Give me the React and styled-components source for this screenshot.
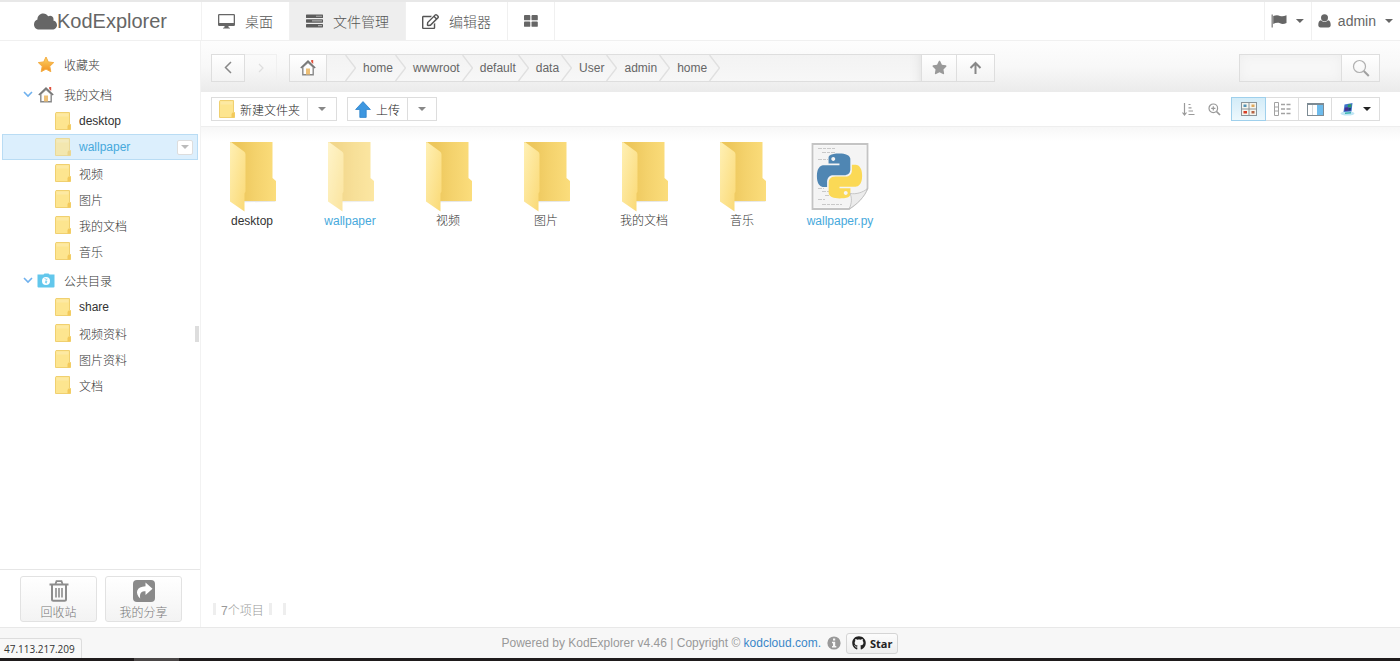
import React from "react";
import styled, { createGlobalStyle, css } from "styled-components";
import { useState } from "react";
import { FaCloud, FaRegEdit, FaStar, FaGithub } from "react-icons/fa";

const leafDocs = ["desktop", "wallpaper", "视频", "图片", "我的文档", "音乐"];
const leafPublic = ["share", "视频资料", "图片资料", "文档"];
const crumbs = ["home", "wwwroot", "default", "data", "User", "admin", "home"];

/* ---------- icons ---------- */

const DesktopIcon = () => (
  <svg width="17" height="16" viewBox="0 0 17 16">
    <path fill="#666" fillRule="evenodd" d="M1.3 1h14.4A1.3 1.3 0 0 1 17 2.300V11.700A1.300 1.300 0 0 1 15.700 13H10.500V14.200L12 15V15.600H5V15L6.500 14.200V13H1.300A1.300 1.300 0 0 1 0 11.700V2.300A1.300 1.300 0 0 1 1.300 1ZM1.300 2.200V10H15.700V2.200Z" />
  </svg>
);

const TasksIcon = () => (
  <svg width="17" height="14" viewBox="0 0 17 14">
    <rect x="0" y="0.500" width="17" height="3.500" rx="0.600" fill="#5c5c5c" />
    <rect x="0" y="5.200" width="17" height="3.500" rx="0.600" fill="#5c5c5c" />
    <rect x="0" y="9.900" width="17" height="3.500" rx="0.600" fill="#5c5c5c" />
    <path d="M10 2.200h6M6 6.900h10M12 11.600h4" stroke="#aaa" strokeWidth="1.100" />
  </svg>
);

const GridIcon = () => (
  <svg width="14" height="12" viewBox="0 0 14 12" fill="#666">
    <rect x="0" y="0" width="6.300" height="5.300" rx="0.900" />
    <rect x="7.500" y="0" width="6.300" height="5.300" rx="0.900" />
    <rect x="0" y="6.500" width="6.300" height="5.300" rx="0.900" />
    <rect x="7.500" y="6.500" width="6.300" height="5.300" rx="0.900" />
  </svg>
);

const FlagIcon = () => (
  <svg width="16" height="14" viewBox="0 0 16 14" fill="#666">
    <path d="M0.500 0.500h1.400v13H0.500z" fill="#8a8a8a" />
    <path d="M2.200 2C4.500 1 7 0.800 9 1.900C11 2.800 13 2.300 15.500 1.200V8.900C13 10.200 11 10.300 9 9.300C7 8.400 4.500 8.800 2.200 9.900Z" />
  </svg>
);

const UserIcon = () => (
  <svg width="13" height="14" viewBox="0 0 13 14" fill="#666">
    <circle cx="6.500" cy="3.700" r="3.500" />
    <path d="M3 6.300C1 6.700 0.300 8.500 0.300 11C0.300 12.600 1.100 13.500 2.500 13.500H10.500C11.900 13.500 12.700 12.600 12.700 11C12.700 8.500 12 6.700 10 6.300C8 8.300 5 8.300 3 6.300Z" />
  </svg>
);

const HouseIcon = () => (
  <svg width="16" height="17" viewBox="0 0 16 17">
    <path d="M11.200 1h2v4l-2-2z" fill="#e0503c" />
    <path d="M2.800 8v7.800h10.400V8L8 3.200z" fill="#fdfdfd" stroke="#888" strokeWidth="1.400" />
    <path d="M0.800 9L8 2l7.200 7" fill="none" stroke="#777" strokeWidth="1.500" />
    <rect x="6" y="9.500" width="4" height="6" fill="#edbf76" />
  </svg>
);

const SmallFolder = ({ faded }) => (
  <svg width="16" height="18" viewBox="0 0 16 18" opacity={faded ? 0.7 : 1}>
    <path d="M0.500 1.200L1 0.500H14.500V12L15.500 12.500V17.500H0.500Z" fill="#fde58f" stroke="#f0d070" />
    <path d="M13.500 12.500H15.500V17.500H12.500V14Z" fill="#f3c95a" />
    <path d="M1.500 1.500h12v3h-12z" fill="#fff" opacity="0.180" />
  </svg>
);

const PublicIcon = () => (
  <svg width="18" height="15" viewBox="0 0 18 15">
    <path d="M0.500 1.500h6l1-1h4l1 1h5V13.500a1 1 0 0 1-1 1H1.500a1 1 0 0 1-1-1Z" fill="#62c7ec" />
    <circle cx="9" cy="8" r="4" fill="#fff" />
    <path d="M7.500 5.500l2 1 1-.5M9 7.500l.8.8-.5 2-1-.8z" fill="#62c7ec" stroke="#62c7ec" strokeWidth="0.500" />
  </svg>
);

const StarIcon = () => (
  <svg width="17" height="17" viewBox="0 0 17 17">
    <defs>
      <linearGradient id="gold" x1="0" y1="0" x2="0" y2="1">
        <stop offset="0" stopColor="#fdd566" />
        <stop offset="1" stopColor="#f2901f" />
      </linearGradient>
    </defs>
    <path d="M8.500 1l2.300 4.900 5.400.7-3.900 3.700 1 5.400-4.800-2.600-4.800 2.600 1-5.400L.8 6.600l5.400-.7z" fill="url(#gold)" stroke="#f4ad43" strokeWidth="1" strokeLinejoin="round" />
  </svg>
);

const ChevronDown = () => (
  <svg width="10" height="7" viewBox="0 0 10 7">
    <path d="M1 1l4 4 4-4" fill="none" stroke="#6fb1ee" strokeWidth="1.600" />
  </svg>
);

const CrumbArrow = () => (
  <svg width="11" height="26" viewBox="0 0 11 26">
    <path d="M0.500 0l10 13-10 13" fill="none" stroke="#e0e0e0" strokeWidth="1.400" />
  </svg>
);

const BackIcon = () => (
  <svg width="8" height="13" viewBox="0 0 8 13">
    <path d="M7 1L1.500 6.500 7 12" fill="none" stroke="#888" strokeWidth="1.500" />
  </svg>
);

const ForwardIcon = () => (
  <svg width="6" height="10" viewBox="0 0 6 10">
    <path d="M1 1l4 4-4 4" fill="none" stroke="#dedede" strokeWidth="1.200" />
  </svg>
);

const UpIcon = () => (
  <svg width="13" height="14" viewBox="0 0 13 14">
    <path d="M6.500 13V2M1.500 7l5-5 5 5" fill="none" stroke="#888" strokeWidth="2" />
  </svg>
);

const SearchIcon = () => (
  <svg width="18" height="18" viewBox="0 0 18 18" fill="none">
    <circle cx="7.500" cy="7.500" r="6" stroke="#b0b0b0" strokeWidth="1.200" />
    <path d="M11.800 12l5 5" stroke="#a0a0a0" strokeWidth="2" />
  </svg>
);

const UploadIcon = () => (
  <svg width="16" height="17" viewBox="0 0 16 17">
    <path d="M8 0.600L15.400 8.500H11.200V16.400H4.800V8.500H0.600Z" fill="#3d97e0" stroke="#2f83cc" strokeWidth="0.800" />
  </svg>
);

const SortIcon = () => (
  <svg width="13" height="13" viewBox="0 0 13 13" fill="none" stroke="#9a9a9a">
    <path d="M2.500 0v12M0.500 9.500l2 2.500 2-2.500M6.500 1.500h2M6.500 4.800h3M6.500 8h4.500M6.500 11.500h6" strokeWidth="1.200" />
  </svg>
);

const ZoomIcon = () => (
  <svg width="13" height="13" viewBox="0 0 13 13" fill="none" stroke="#999">
    <circle cx="5.300" cy="5.300" r="4.300" strokeWidth="1.200" />
    <path d="M8.500 8.500l3.500 3.500" strokeWidth="1.700" />
    <path d="M5.300 3.200v4.200M3.200 5.300h4.200" strokeWidth="1.200" />
  </svg>
);

const ThumbsIcon = () => (
  <svg width="16" height="14" viewBox="0 0 16 14">
    <rect x="0.500" y="0.500" width="15" height="13" fill="#f5f5ee" stroke="#8a9499" />
    <path d="M8 0v14M0 7h16" stroke="#8a9499" />
    <rect x="2.500" y="2.500" width="3" height="2.500" fill="#5192b5" />
    <rect x="10.500" y="2.500" width="3" height="2.500" fill="#dfa85a" />
    <rect x="2.500" y="9" width="3.500" height="2.500" fill="#d63d25" />
    <rect x="10.500" y="9" width="3" height="2.500" fill="#b56343" />
  </svg>
);

const ListIcon = () => (
  <svg width="17" height="14" viewBox="0 0 17 14" fill="none" stroke="#a2a2a2">
    <path d="M0.500 0.500h4v13h-4zM0.500 5h4M0.500 9h4" />
    <path d="M7 2.500h4M12.500 2.500h4M7 7h4M12.500 7h4M7 11.500h4M12.500 11.500h4" strokeWidth="1.400" />
  </svg>
);

const SplitIcon = () => (
  <svg width="17" height="13" viewBox="0 0 17 13">
    <rect x="0.500" y="0.500" width="16" height="12" fill="#fff" stroke="#7d8b94" />
    <path d="M0.500 1.500h16" stroke="#7d8b94" />
    <rect x="10" y="2" width="6" height="10" fill="#6dbbec" />
    <path d="M5.500 2v10" stroke="#d5dadd" />
  </svg>
);

const ThemeIcon = () => (
  <svg width="15" height="14" viewBox="0 0 15 14">
    <ellipse cx="7.500" cy="11.500" rx="7" ry="2" fill="#bfe6f5" />
    <path d="M4.500 2.500L12.500 1l-1 8.500-8 .5z" fill="#3f74cc" />
    <path d="M8 2.500l3.500-.3-.4 3-3.600.3z" fill="#2c9a62" />
    <path d="M5 5.500l3.500-.3-.4 3.500-3.600.3z" fill="#4a2f8f" />
    <path d="M8.500 6l2.500-.2-.3 2.700-2.500.2z" fill="#243a78" />
    <path d="M5 10.500l6-.5v1.500l-6 .5z" fill="#3db4b0" />
  </svg>
);

const TrashIcon = () => (
  <svg width="20" height="22" viewBox="0 0 20 22" fill="none" stroke="#8c8c8c">
    <path d="M0.500 4.500h19" strokeWidth="2" />
    <path d="M6.500 4L7.500 1.200h5L13.500 4" strokeWidth="1.800" />
    <path d="M3 5v14.200a1.500 1.500 0 0 0 1.500 1.500h11a1.500 1.500 0 0 0 1.500-1.500V5" strokeWidth="2" />
    <path d="M7 8v9.500M10 8v9.500M13 8v9.500" strokeWidth="1.600" />
  </svg>
);

const ShareIcon = () => (
  <svg width="22" height="22" viewBox="0 0 22 22">
    <rect width="22" height="22" rx="4" fill="#8a8a8a" />
    <path d="M12.500 2.500l7 6.200-7 6.200v-3.700C8.500 11.200 6.300 13 7.200 18.500C1.500 13 3.500 6.500 12.500 6.200Z" fill="#fff" />
  </svg>
);

const InfoIcon = () => (
  <svg width="14" height="14" viewBox="0 0 14 14">
    <circle cx="7" cy="7" r="6.600" fill="#999" />
    <path d="M6 2.500h2.200v2H6zM5 5.800h3.200v4.200H9.300v1.500H5v-1.500h1V7.200H5z" fill="#f7f7f7" />
  </svg>
);

const BigFolder = ({ faded }) => (
  <svg width="48" height="70" viewBox="0 0 48 70" opacity={faded ? 0.7 : 1}>
    <defs>
      <linearGradient id="back" x1="0" y1="0" x2="1" y2="0">
        <stop offset="0.200" stopColor="#edc75c" />
        <stop offset="0.550" stopColor="#f4d26c" />
        <stop offset="1" stopColor="#fbdd7c" />
      </linearGradient>
      <linearGradient id="flap" x1="0" y1="0" x2="1" y2="1">
        <stop offset="0" stopColor="#fff0b4" />
        <stop offset="1" stopColor="#fad975" />
      </linearGradient>
    </defs>
    <path d="M16 59.500h31l1 .8-32 .5z" fill="#e6e6e6" />
    <path d="M2 0.500H44.500V36.500L48 39.500V59.500H2Z" fill="url(#back)" />
    <path d="M2 1L3 0.500L16 10Q17.500 11 17.500 13V50L16.500 52V70L2 60Z" fill="url(#flap)" />
  </svg>
);

const PythonFile = () => (
  <svg width="58" height="68" viewBox="0 0 58 68">
    <path d="M1.500 1.500H56.500V46C53 54 46 61 38 66.500H1.500Z" fill="#f8f8f8" stroke="#c4c4c4" strokeWidth="1.800" />
    <path d="M3.500 3.500H54.500V46L38 64.500H3.500Z" fill="#f4f4f4" />
    <path d="M7 6h18M11 10h13M7 17h10M7 46h6M11 49h7M14 53h8M7 57h7M11 62h20" stroke="#c9c9c9" strokeDasharray="4 1 3 1" />
    <g transform="translate(6 11) scale(1.870)">
      <path fill="#4f86b3" d="M14.250.180l.9.200.730.260.590.300.450.320.340.340.250.340.160.330.100.300.040.260.020.200-.010.130V8.500l-.050.630-.130.550-.210.460-.260.380-.300.310-.330.250-.350.190-.350.140-.330.100-.300.070-.260.040-.210.020H8.770l-.690.050-.590.140-.500.220-.410.270-.330.320-.270.350-.200.360-.150.370-.100.350-.070.320-.040.270-.020.210v3.060H3.170l-.210-.030-.280-.070-.320-.120-.350-.180-.360-.260-.360-.360-.350-.460-.320-.590-.280-.730-.210-.880-.140-1.050-.050-1.230.060-1.220.160-1.040.240-.870.320-.710.360-.570.400-.440.420-.330.420-.240.400-.160.360-.100.320-.050.240-.010h.160l.060.010h8.160v-.830H6.180l-.010-2.750-.020-.370.050-.340.110-.310.170-.280.250-.260.310-.230.380-.200.440-.180.510-.150.580-.120.640-.100.710-.060.770-.040.840-.020 1.270.050zm-6.300 1.980l-.230.330-.080.410.080.410.230.340.330.220.410.090.410-.090.330-.220.230-.340.080-.410-.080-.410-.230-.330-.330-.220-.410-.090-.410.090z" />
      <path fill="#fbd956" d="M21.100 6.110l.280.060.320.120.350.180.360.270.360.350.350.470.320.590.280.730.210.880.140 1.040.050 1.230-.060 1.230-.160 1.040-.240.860-.320.710-.360.570-.400.450-.420.330-.420.240-.400.160-.360.090-.320.050-.240.020-.160-.010h-8.220v.820h5.840l.010 2.760.020.360-.050.340-.110.310-.170.290-.250.250-.310.240-.380.200-.440.170-.510.150-.580.130-.640.090-.710.070-.770.040-.840.010-1.270-.040-1.070-.140-.900-.200-.730-.250-.590-.300-.450-.330-.340-.340-.250-.340-.160-.330-.100-.300-.040-.250-.020-.200.010-.130v-5.340l.050-.640.130-.540.210-.460.260-.380.300-.320.330-.240.350-.200.350-.140.330-.100.300-.060.260-.040.210-.020.130-.010h5.840l.690-.050.590-.140.500-.210.410-.280.330-.320.270-.350.200-.360.150-.360.100-.350.070-.320.040-.280.020-.210V6.070h2.090l.140.010zm-6.470 14.250l-.230.330-.080.410.080.410.230.330.330.230.410.080.410-.080.330-.230.230-.330.080-.410-.080-.410-.230-.330-.330-.230-.410-.080-.410.080z" />
    </g>
    <path d="M38 66.500C41 61 41 55 39 51C45 52 52 50 56.500 46C54 54 46 62 38 66.500Z" fill="#ececec" stroke="#bbb" strokeWidth="0.800" />
  </svg>
);

/* ---------- app ---------- */

const App = () => {

  const [selected, setSelected] = useState('wallpaper')
  const [tab, setTab] = useState('explorer')

  return (
    <Page>
      <Global />
      <Header>
        <Logo href="#home"><FaCloud size={23} /><span>KodExplorer</span></Logo>
        <Nav>
          <NavButton $active={tab === 'desktop'} onClick={() => setTab('desktop')}><DesktopIcon />桌面</NavButton>
          <NavButton $active={tab === 'explorer'} onClick={() => setTab('explorer')}><TasksIcon />文件管理</NavButton>
          <NavButton $active={tab === 'editor'} onClick={() => setTab('editor')}><FaRegEdit size={17} />编辑器</NavButton>
          <NavButton aria-label="apps"><GridIcon /></NavButton>
        </Nav>
        <UserButton aria-label="language"><FlagIcon /><Caret /></UserButton>
        <UserButton><UserIcon /><span>admin</span><Caret /></UserButton>
      </Header>

      <Body>
        <Sidebar>
          <Tree>
            <Root><Toggle /><StarIcon />收藏夹</Root>
            <Root><Toggle><ChevronDown /></Toggle><HouseIcon />我的文档</Root>
            {leafDocs.map((name) => (
              <Leaf key={name} $active={selected === name} onClick={() => setSelected(name)}>
                <SmallFolder faded={selected === name} />
                <span>{name}</span>
                {selected === name && <LeafMenu aria-label="menu"><Caret $color="#bbb" /></LeafMenu>}
              </Leaf>
            ))}
            <Root><Toggle><ChevronDown /></Toggle><PublicIcon />公共目录</Root>
            {leafPublic.map((name) => (
              <Leaf key={name} $active={selected === name} onClick={() => setSelected(name)}>
                <SmallFolder faded={selected === name} />
                <span>{name}</span>
              </Leaf>
            ))}
          </Tree>
          <SideTools>
            <SideButton><TrashIcon />回收站</SideButton>
            <SideButton><ShareIcon />我的分享</SideButton>
          </SideTools>
          <Handle />
        </Sidebar>

        <Main>
          <LocationBar>
            <Group>
              <BarButton $w={34} aria-label="back"><BackIcon /></BarButton>
              <BarButton $w={32} $off aria-label="forward"><ForwardIcon /></BarButton>
            </Group>
            <Address>
              <BarButton $w={38} aria-label="home"><HouseIcon /></BarButton>
              <Crumbs>
                <CrumbStart><CrumbArrow /></CrumbStart>
                {crumbs.map((name, i) => (
                  <Crumb href="#path" key={i}>{name}<CrumbArrow /></Crumb>
                ))}
              </Crumbs>
              <BarButton $w={36} aria-label="favorite"><FaStar size={15} /></BarButton>
              <BarButton $w={38} aria-label="up"><UpIcon /></BarButton>
            </Address>
            <Search>
              <input type="text" aria-label="search" />
              <BarButton $w={39} aria-label="search"><SearchIcon /></BarButton>
            </Search>
          </LocationBar>

          <Toolbar>
            <Group>
              <ToolButton $w={97}><SmallFolder />新建文件夹</ToolButton>
              <ToolButton $w={29} aria-label="more"><Caret $color="#888" /></ToolButton>
            </Group>
            <Group>
              <ToolButton $w={61}><UploadIcon />上传</ToolButton>
              <ToolButton $w={29} aria-label="more"><Caret $color="#888" /></ToolButton>
            </Group>
            <Views>
              <PlainButton aria-label="sort"><SortIcon /></PlainButton>
              <PlainButton aria-label="icon size"><ZoomIcon /></PlainButton>
              <Group>
                <ToolButton $w={35} $active aria-label="icons"><ThumbsIcon /></ToolButton>
                <ToolButton $w={33} aria-label="list"><ListIcon /></ToolButton>
                <ToolButton $w={33} aria-label="split"><SplitIcon /></ToolButton>
                <ToolButton $w={48} $gap={8} aria-label="theme"><ThemeIcon /><Caret $color="#222" /></ToolButton>
              </Group>
            </Views>
          </Toolbar>

          <Files>
            {leafDocs.map((name) => (
              <File key={name} $active={name === 'wallpaper'}>
                <BigFolder faded={name === 'wallpaper'} />
                <span>{name}</span>
              </File>
            ))}
            <File $active>
              <PythonFile />
              <span>wallpaper.py</span>
            </File>
          </Files>
          <Status><i /><span>7个项目</span><i /><i /></Status>
        </Main>
      </Body>

      <Footer>
        <p>Powered by KodExplorer v4.46 | Copyright © <a href="#kod">kodcloud.com.</a></p>
        <InfoIcon />
        <StarButton><FaGithub size={14} />Star</StarButton>
        <LinkHint>47.113.217.209</LinkHint>
      </Footer>
      <Taskbar><div /></Taskbar>
    </Page>
  );
};

const Global = createGlobalStyle`
*{
  box-sizing: border-box;
}

body{
  margin: 0;
  background: #fff;
}

body, button, input{
  font-family: "Liberation Sans", "Noto Sans CJK SC", sans-serif;
  font-size: 12px;
  font-weight: 300;
}

button{
  padding: 0;
  margin: 0;
  border: 0;
  background: none;
  cursor: pointer;
}

a{
  text-decoration: none;
}

svg{
  flex: none;
  display: block;
}
`;

const Page = styled.div`
display: flex;
flex-direction: column;
min-height: 100vh;
color: #333;
`;

const Caret = styled.span`
flex: none;
width: 8px;
height: 4px;
background-color: ${(p) => p.$color || '#666'};
clip-path: polygon(0 0, 100% 0, 50% 100%);
`;

const Header = styled.header`
display: flex;
height: 41px;
border-top: 2px solid #e8e8e8;
border-bottom: 1px solid #f0f0f0;
`;

const Logo = styled.a`
display: flex;
align-items: center;
justify-content: center;
width: 202px;
border-right: 1px solid #f2f2f2;
color: #666;
font-size: 20px;
`;

const Nav = styled.nav`
display: flex;
flex: 1;
`;

const NavButton = styled.button`
display: flex;
align-items: center;
gap: 10px;
padding: 0 16px;
border-right: 1px solid #f0f0f0;
background-color: ${(p) => (p.$active ? '#eee' : '#fff')};
color: #555;
font-size: 14px;
`;

const UserButton = styled.button`
display: flex;
align-items: center;
gap: 7px;
padding: 0 7px 0 6px;
border-left: 1px solid #f0f0f0;
color: #666;
font-size: 14px;

${Caret}{
  margin-left: 2px;
}
`;

const Body = styled.div`
display: flex;
flex: 1;
`;

const Sidebar = styled.aside`
position: relative;
display: flex;
flex-direction: column;
width: 201px;
border-right: 1px solid #f2f2f2;
`;

const Tree = styled.ul`
display: flex;
flex: 1;
flex-direction: column;
margin: 0;
padding: 7px 2px;
list-style: none;
`;

const Root = styled.li`
display: flex;
align-items: center;
height: 26px;
margin: 3px 0 1px;
padding-left: 21px;

> svg{
  width: 18px;
  margin-right: 9px;
}
`;

const Toggle = styled.span`
width: 14px;
`;

const Leaf = styled.li`
display: flex;
align-items: center;
gap: 8px;
height: 26px;
padding: 0 4px 0 52px;
border: 1px solid transparent;
cursor: pointer;

> span{
  flex: 1;
}

${(p) => p.$active && css`
  border-color: #b9dcf4;
  background-color: #dceffd;
  color: #47a9dc;
`}
`;

const LeafMenu = styled.button`
display: flex;
align-items: center;
justify-content: center;
width: 16px;
height: 15px;
border: 1px solid #ddd;
border-radius: 2px;
background-color: #fff;
`;

const SideTools = styled.div`
display: flex;
gap: 8px;
padding: 6px 18px 5px 20px;
border-top: 1px solid #e6e6e6;
`;

const SideButton = styled.button`
display: flex;
flex: 1;
flex-direction: column;
align-items: center;
height: 46px;
padding-top: 3px;
border: 1px solid #e2e2e2;
border-radius: 3px;
background-image: linear-gradient(#fff, #f3f3f3);
color: #777;
line-height: 22px;
`;

const Handle = styled.div`
position: absolute;
right: 1px;
top: 285px;
width: 4px;
height: 16px;
background-color: #ddd;
`;

const Main = styled.main`
display: flex;
flex: 1;
flex-direction: column;
`;

const LocationBar = styled.div`
display: flex;
align-items: center;
gap: 12px;
height: 51px;
padding: 2px 20px 0 10px;
background-image: linear-gradient(#fdfdfd, #f8f8f8 50%, #ebebeb);
`;

const Group = styled.div`
display: flex;
`;

const BarButton = styled.button`
display: flex;
align-items: center;
justify-content: center;
width: ${(p) => p.$w}px;
height: 28px;
border: 1px solid #dedede;
background-image: linear-gradient(#fff, #f3f3f3);
color: #999;

& + &{
  border-left: 0;
}

${(p) => p.$off && css`
  border-color: #f0f0f0;
  background-image: none;
`}
`;

const Address = styled.div`
display: flex;
flex: 1;
max-width: 706px;
`;

const Crumbs = styled.div`
display: flex;
flex: 1;
border: 1px solid #dedede;
border-width: 1px 0;
background-image: linear-gradient(#f3f3f3, #f7f7f7);
box-shadow: inset -12px 0 12px -12px #ddd;
`;

const CrumbStart = styled.span`
padding-left: 18px;
`;

const Crumb = styled.a`
display: flex;
align-items: center;
gap: 2px;
padding-left: 7px;
color: #666;
`;

const Search = styled.div`
display: flex;
margin-left: auto;

input{
  width: 102px;
  height: 28px;
  border: 1px solid #dedede;
  border-right: 0;
  background-color: #f7f7f7;
  box-shadow: inset 0 0 12px #eee;
  outline: none;
}
`;

const Toolbar = styled.div`
display: flex;
align-items: center;
gap: 10px;
height: 35px;
padding: 0 20px 0 10px;
border-bottom: 1px solid #eee;
`;

const ToolButton = styled.button`
display: flex;
align-items: center;
justify-content: center;
gap: ${(p) => p.$gap || 5}px;
width: ${(p) => p.$w}px;
height: 24px;
border: 1px solid #ddd;
background-color: #fff;
color: #222;

& + &{
  border-left: 0;
}

${(p) => p.$active && css`
  border-color: #9fd0ec;
  background-image: linear-gradient(#d3ecf8, #edf8fd);
`}
`;

const Views = styled.div`
display: flex;
align-items: center;
gap: 10px;
margin-left: auto;
`;

const PlainButton = styled.button`
display: flex;
align-items: center;
justify-content: flex-end;
width: 16px;
height: 16px;
`;

const Files = styled.div`
display: flex;
flex: 1;
flex-wrap: wrap;
align-content: flex-start;
padding: 14px 2px;
background-image: linear-gradient(#f7f7f7, #fff 14px);
`;

const File = styled.div`
display: flex;
flex-direction: column;
align-items: center;
width: 98px;
color: ${(p) => (p.$active ? '#47a9dc' : '#333')};
line-height: 16px;

svg{
  height: 71px;
}

span{
  margin-top: 1px;
}
`;

const Status = styled.div`
display: flex;
align-items: center;
gap: 5px;
height: 36px;
padding: 0 12px;
color: #999;

i{
  width: 3px;
  height: 12px;
  background-color: #eee;
}

i + i{
  margin-left: 6px;
}
`;

const Footer = styled.footer`
position: relative;
display: flex;
align-items: center;
justify-content: center;
height: 31px;
border-top: 1px solid #e8e8e8;
background-color: #f7f7f7;
color: #999;

p{
  margin: 0 6px 0 0;
}

a{
  color: #3a87c8;
}
`;

const StarButton = styled.button`
display: flex;
align-items: center;
gap: 4px;
height: 21px;
margin-left: 5px;
padding: 0 5px;
border: 1px solid #d5d5d5;
border-radius: 3px;
background-image: linear-gradient(#fcfcfc, #eee);
color: #222;
font-family: "Open Sans", sans-serif;
font-size: 11px;
font-weight: 700;
`;

const LinkHint = styled.div`
position: absolute;
left: 0;
bottom: 0;
width: 82px;
height: 20px;
padding-left: 4px;
border: 1px solid #ddd;
border-width: 1px 1px 0 0;
border-radius: 0 3px 0 0;
background-color: #f8f8f8;
color: #333;
font-family: "Open Sans", sans-serif;
font-size: 10px;
font-weight: 400;
line-height: 20px;
`;

const Taskbar = styled.div`
height: 3px;
padding-left: 134px;
background-color: #1f1b1c;

div{
  width: 45px;
  height: 3px;
  background-color: #4a4646;
}
`;

export default App;
